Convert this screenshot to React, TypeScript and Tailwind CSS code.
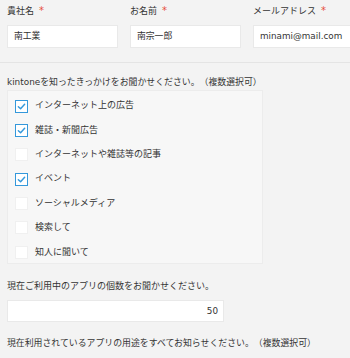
import React from 'react';

const font = { fontFamily: '"DejaVu Sans", "Noto Sans CJK JP", sans-serif' };

interface FieldProps {
    label: string;
    value: string;
    width: string;
}

const Field: React.FC<FieldProps> = ({ label, value, width }) => (
    <div className={`flex flex-col shrink-0 ${width}`}>
        <div className="h-[12px] leading-[12px] text-[9px] text-[#333] whitespace-nowrap">
            {label}
            <span className="text-[#e74c3c] text-[10px] ml-[5px]">*</span>
        </div>
        <div className="mt-[8px] h-[23px] bg-white border border-[#e9e9e9] flex items-center px-[6px] text-[8.8px] text-[#333] whitespace-nowrap overflow-hidden">
            {value}
        </div>
    </div>
);

const options = [
    { label: 'インターネット上の広告', checked: true },
    { label: '雑誌・新聞広告', checked: true },
    { label: 'インターネットや雑誌等の記事', checked: false },
    { label: 'イベント', checked: true },
    { label: 'ソーシャルメディア', checked: false },
    { label: '検索して', checked: false },
    { label: '知人に聞いて', checked: false },
];

const Checkbox: React.FC<{ checked: boolean }> = ({ checked }) =>
    checked ? (
        <span className="w-[13px] h-[13px] bg-white border border-[#3498db] flex items-center justify-center shrink-0">
            <svg width="9" height="9" viewBox="0 0 10 10" fill="none">
                <path d="M1.5 5.2 L4 7.5 L8.5 2.5" stroke="#3498db" strokeWidth="1.6" strokeLinecap="round" strokeLinejoin="round" />
            </svg>
        </span>
    ) : (
        <span className="w-[13px] h-[13px] bg-white border border-[#f0f0f0] shrink-0" />
    );

export default function App() {
    return (
        <div className="w-[350px] h-[358px] overflow-hidden bg-[#f3f3f3] text-[#333] [text-spacing-trim:space-all]" style={font}>
            {/* Top row */}
            <div className="flex gap-[12px] pl-[7px] pt-[5px] pb-[14px]">
                <Field label="貴社名" value="南工業" width="w-[111px]" />
                <Field label="お名前" value="南宗一郎" width="w-[111px]" />
                <Field label="メールアドレス" value="minami@mail.com" width="w-[111px]" />
            </div>

            <div className="h-px bg-[#e4e4e4]" />

            {/* Checkbox question */}
            <div className="pl-[7px] pt-[13px]">
                <div className="h-[12px] leading-[12px] text-[8.9px] whitespace-nowrap">
                    kintoneを知ったきっかけをお聞かせください。（複数選択可）
                </div>
                <div className="mt-[2px] w-[256px] bg-[#f7f7f7] border border-[#ececec] pl-[7px] pt-[6px] pb-[2px] flex flex-col gap-[6.4px]">
                    {options.map((o) => (
                        <div key={o.label} className="h-[18px] flex items-center gap-[7px]">
                            <Checkbox checked={o.checked} />
                            <span className="text-[9px] whitespace-nowrap">{o.label}</span>
                        </div>
                    ))}
                </div>

                {/* Number question */}
                <div className="mt-[16px] h-[12px] leading-[12px] text-[9px] whitespace-nowrap">
                    現在ご利用中のアプリの個数をお聞かせください。
                </div>
                <div className="mt-[8px] w-[217px] h-[22px] bg-white border border-[#e9e9e9] flex items-center justify-end pr-[5px] text-[8.8px]">
                    50
                </div>

                <div className="mt-[15px] h-[12px] leading-[12px] text-[8.9px] whitespace-nowrap">
                    現在利用されているアプリの用途をすべてお知らせください。（複数選択可）
                </div>
            </div>
        </div>
    );
}
